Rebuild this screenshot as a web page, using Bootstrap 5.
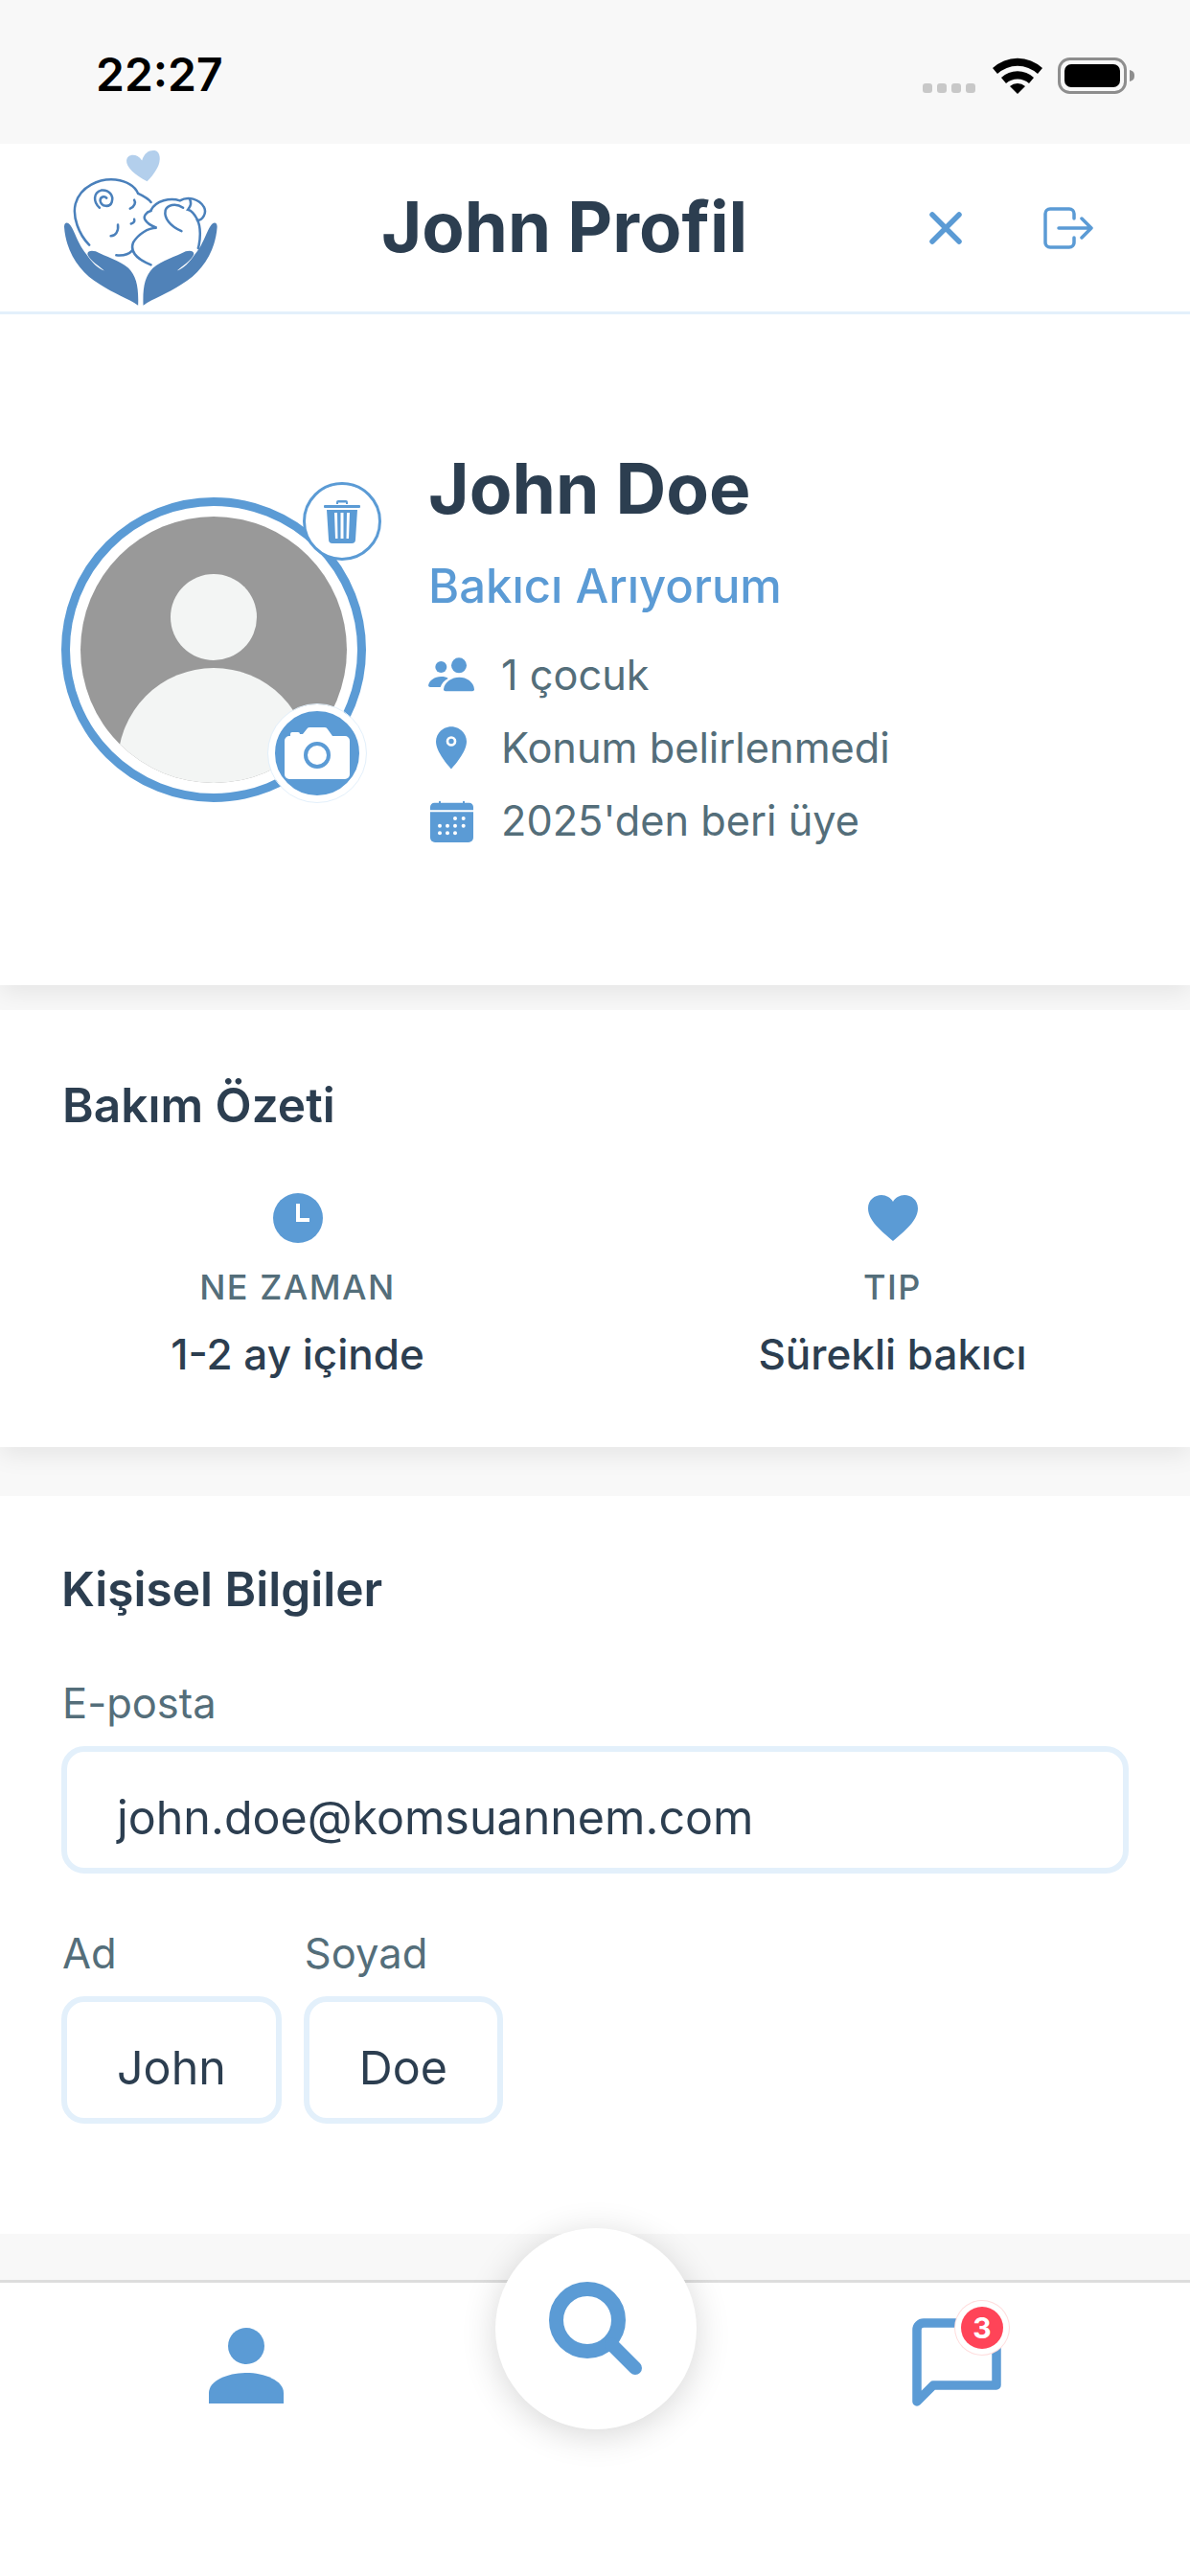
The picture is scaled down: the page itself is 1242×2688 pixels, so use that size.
<!DOCTYPE html>
<html lang="tr">

<head>
    <meta charset="UTF-8">
    <meta name="viewport" content="width=device-width, initial-scale=1.0">
    <title>John Profil</title>
    <link href="https://cdn.jsdelivr.net/npm/bootstrap@5.3.3/dist/css/bootstrap.min.css" rel="stylesheet">
    <script src="https://cdn.jsdelivr.net/npm/bootstrap@5.3.3/dist/js/bootstrap.bundle.min.js"></script>
    <style>
        body { font-family: Inter, "Liberation Sans", sans-serif; background: #f8f8f8; color: #2c3e50; }
        .app-page { width: 1242px; height: 2688px; overflow: hidden; }

        .status-row { height: 150px; background: #f8f8f8; padding: 0 58px 0 100px; }
        .status-time { font-size: 48px; font-weight: 600; color: #000; line-height: 1; margin-top: 54px; }
        .status-icons { margin-top: 58px; height: 40px; }
        .signal-dots { gap: 5px; margin-right: 18px; margin-bottom: 1px; }
        .signal-dot { width: 10px; height: 10px; border-radius: 3px; background: #c8c8c8; }

        .top-bar { height: 178px; background: #fff; border-bottom: 3px solid #e3f0fb; padding-left: 65px; padding-right: 101px; }
        .top-title { font-size: 72.500px; font-weight: 700; margin: 0 0 0 168px; line-height: 1; color: #2c3e50; }
        .top-actions { gap: 85px; }

        .sheet { background: #fff; box-shadow: 0 8px 24px rgba(0, 0, 0, .08); clip-path: inset(0 0 -40px 0); }
        .profile-sheet { height: 700px; padding-left: 64px; margin-bottom: 26px; }
        .avatar-wrap { width: 318px; height: 318px; margin-right: 65px; }
        .avatar-ring { width: 318px; height: 318px; border: 9px solid #5b9bd5; border-radius: 50%; padding: 11px; }
        .avatar-btn { width: 82px; height: 82px; background: #fff; border: 3px solid #5b9bd5; top: -16px; right: -16px; }
        .camera-btn { width: 102px; height: 102px; background: #5b9bd5; border: 7px solid #fff; outline: 1px solid #e3f0fb; bottom: 0; right: 0; }

        .profile-info { margin-top: 11px; }
        .person-name { font-size: 73px; font-weight: 700; line-height: 73px; margin: 0; }
        .person-role { font-size: 49px; font-weight: 500; color: #5b9bd5; line-height: 49px; margin-top: 41px; margin-bottom: 30px; }
        .meta-row { height: 76px; font-size: 43.300px; color: #546e7a; }
        .meta-icon { width: 48px; margin-right: 28px; }

        .care-sheet { height: 456px; margin-bottom: 51px; padding-top: 70px; }
        .section-title { font-size: 49.600px; font-weight: 600; line-height: 58px; margin: 0; color: #2c3e50; }
        .care-sheet .section-title { padding-left: 65px; }
        .care-grid { margin-top: 63px; }
        .care-label { font-size: 36px; font-weight: 500; color: #546e7a; letter-spacing: 1.5px; line-height: 44px; margin-top: 24px; }
        .care-value { font-size: 44px; font-weight: 500; line-height: 52px; margin-top: 22px; color: #2c3e50; }

        .info-sheet { height: 770px; padding: 68px 64px 0; box-shadow: none; clip-path: none; }
        .info-sheet .section-title { margin-bottom: 64px; }
        .field-label { font-size: 43.500px; color: #546e7a; line-height: 52px; margin: 0 0 19px; padding-left: 1px; }
        .field-box { font-size: 48.400px; line-height: 58px; color: #2c3e50; height: 133px; padding: 40px 52px 0; border: 6px solid #e3f0fb; border-radius: 24px; background: #fff; }
        .name-fields { gap: 23px; margin-top: 57px; }

        .spacer-grey { height: 48px; background: #f8f8f8; }
        .tab-bar { height: 309px; background: #fff; border-top: 3px solid #ddd; }
        .search-fab { width: 210px; height: 210px; background: #fff; top: -57px; left: 517px; box-shadow: 0 6px 36px rgba(0, 0, 0, .16); }
        .person-tab { left: 218px; top: 47px; }
        .chat-tab { left: 952px; top: 37px; }
        .chat-badge { width: 44px; height: 44px; background: #ff4458; color: #fff; font-size: 30px; font-weight: 700; line-height: 44px; box-shadow: 0 0 0 6px #fff, 0 0 0 7px #fdd; top: 25px; left: 1003px; }
    </style>
</head>

<body>
    <div class="app-page d-flex flex-column">
        <!-- status bar -->
        <div class="status-row d-flex justify-content-between align-items-start">
            <div class="status-time">22:27</div>
            <div class="status-icons d-flex align-items-end">
                <div class="signal-dots d-flex">
                    <span class="signal-dot"></span><span class="signal-dot"></span><span class="signal-dot"></span><span class="signal-dot"></span>
                </div>
                <svg width="52" height="40" viewBox="0 0 52 40" class="me-3">
                    <path d="M0 13 A38 38 0 0 1 52 13 L47 19 A31 31 0 0 0 5 19 Z" fill="#000"/>
                    <path d="M9 23 A25 25 0 0 1 43 23 L38 29 A18 18 0 0 0 14 29 Z" fill="#000"/>
                    <path d="M18 32 A12 12 0 0 1 34 32 L26 40 Z" fill="#000"/>
                </svg>
                <svg width="80" height="38" viewBox="0 0 80 38">
                    <rect x="1.500" y="1.500" width="69" height="35" rx="11" fill="none" stroke="#8e8e8e" stroke-width="3"/>
                    <rect x="7" y="7" width="58" height="24" rx="7" fill="#000"/>
                    <path d="M75 13 C79 14 80 16 80 19 C80 22 79 24 75 25 Z" fill="#8e8e8e"/>
                </svg>
            </div>
        </div>

        <!-- header -->
        <div class="top-bar d-flex align-items-center">
            <svg width="165" height="166" viewBox="75 78 490 495">
                <path d="M338 180 C300 160 272 135 274 115 C276 95 305 90 322 115 C330 90 345 82 362 84 C380 88 382 115 370 138 C360 155 350 170 338 180 Z" fill="#b3cfec"/>
                <g fill="#5082b8">
                    <path d="M310 566 C280 545 235 530 190 500 C130 465 85 400 80 322 C80 306 92 306 100 318 C115 340 122 375 150 408 C165 430 185 452 205 458 C190 445 160 425 153 408 C150 396 165 394 178 398 C210 415 250 425 280 450 C305 475 312 510 310 566 Z"/>
                    <path transform="translate(636 0) scale(-1 1)" d="M310 566 C280 545 235 530 190 500 C130 465 85 400 80 322 C80 306 92 306 100 318 C115 340 122 375 150 408 C165 430 185 452 205 458 C190 445 160 425 153 408 C150 396 165 394 178 398 C210 415 250 425 280 450 C305 475 312 510 310 566 Z"/>
                </g>
                <g fill="none" stroke="#4a80bb" stroke-width="7.500" stroke-linecap="round">
                    <path d="M158 378 C125 345 105 290 115 250 C130 195 190 170 240 175 C275 180 300 195 310 218 C325 225 340 232 350 245"/>
                    <path d="M190 262 C170 245 170 215 195 208 C220 205 235 225 228 245 C222 262 195 260 192 240 C192 228 205 224 212 232"/>
                    <path d="M285 265 C300 258 303 245 298 238"/>
                    <path d="M288 312 C296 310 300 305 298 298"/>
                    <path d="M225 350 C240 350 250 335 247 315"/>
                    <path d="M350 272 C335 275 325 290 332 300 C340 315 355 320 368 325 C340 325 310 345 295 370 C285 395 300 420 350 440"/>
                    <path d="M242 410 C260 412 280 408 292 395"/>
                    <path d="M350 270 C365 240 410 230 440 240 C465 225 500 235 515 260 C525 280 510 300 495 302 C505 320 505 360 497 388"/>
                    <path d="M470 235 C480 250 470 262 465 268 C480 272 490 290 495 300"/>
                    <path d="M395 270 C400 255 425 245 450 262 M395 270 C390 295 410 320 445 335"/>
                </g>
            </svg>
            <h1 class="top-title">John Profil</h1>
            <div class="top-actions d-flex align-items-center ms-auto">
                <svg width="34" height="34" viewBox="0 0 34 34" fill="none" stroke="#5b9bd5" stroke-width="5.500" stroke-linecap="round"><path d="M3 3 L31 31 M31 3 L3 31"/></svg>
                <svg width="52" height="44" viewBox="0 0 52 44" fill="none" stroke="#5b9bd5" stroke-width="3.500" stroke-linecap="round" stroke-linejoin="round"><path d="M32 12 V7 A5 5 0 0 0 27 2 H7 A5 5 0 0 0 2 7 V37 A5 5 0 0 0 7 42 H27 A5 5 0 0 0 32 37 V32"/><path d="M16 22 H50 M40 12 L50 22 L40 32"/></svg>
            </div>
        </div>

        <!-- profile -->
        <section class="sheet profile-sheet d-flex align-items-center">
            <div class="avatar-wrap position-relative flex-shrink-0">
                <div class="avatar-ring">
                    <svg width="278" height="278" viewBox="0 0 278 278" class="d-block">
                        <clipPath id="avatarClip"><circle cx="139" cy="139" r="139"/></clipPath>
                        <g clip-path="url(#avatarClip)">
                            <rect width="278" height="278" fill="#999"/>
                            <circle cx="139" cy="105" r="45" fill="#f3f5f4"/>
                            <circle cx="139" cy="258" r="100" fill="#f3f5f4"/>
                        </g>
                    </svg>
                </div>
                <div class="avatar-btn position-absolute rounded-circle d-flex align-items-center justify-content-center">
                    <svg width="38" height="45" viewBox="0 0 38 45" fill="#5b9bd5">
                        <path d="M13 4 V2 A2 2 0 0 1 15 0 H23 A2 2 0 0 1 25 2 V4 H23 V2.500 H15 V4 Z"/>
                        <rect x="0" y="5" width="38" height="3" rx="1"/>
                        <path fill-rule="evenodd" d="M3 10 H35 L33 41 A4 4 0 0 1 29 45 H9 A4 4 0 0 1 5 41 Z M11 13 L12 40 H14.500 L14 13 Z M17.500 13 V40 H20.500 V13 Z M24 13 L23.500 40 H26 L27 13 Z"/>
                    </svg>
                </div>
                <div class="camera-btn position-absolute rounded-circle d-flex align-items-center justify-content-center">
                    <svg width="68" height="54" viewBox="0 0 68 54">
                        <path d="M6 9 V7 A2 2 0 0 1 8 5 H14 A2 2 0 0 1 16 7 H19 L23 2 A4 4 0 0 1 26 0 H42 A4 4 0 0 1 45 2 L50 9 H63 A5 5 0 0 1 68 14 V49 A5 5 0 0 1 63 54 H5 A5 5 0 0 1 0 49 V14 A5 5 0 0 1 5 9 Z" fill="#fff"/>
                        <circle cx="34" cy="29" r="12" fill="#fff" stroke="#5b9bd5" stroke-width="4"/>
                    </svg>
                </div>
            </div>
            <div class="profile-info">
                <h2 class="person-name">John Doe</h2>
                <div class="person-role">Bakıcı Arıyorum</div>
                <div class="meta-row d-flex align-items-center">
                    <span class="meta-icon d-flex justify-content-center">
                        <svg width="48" height="36" viewBox="0 0 144 108" fill="#5b9bd5">
                            <circle cx="96" cy="25" r="24"/><path d="M48 100 C50 76 75 62 97 62 C120 62 142 76 144 100 A6 6 0 0 1 138 106 H54 A6 6 0 0 1 48 100 Z"/>
                            <circle cx="40" cy="30" r="18"/><path d="M0 88 C3 72 20 60 40 60 C50 60 58 62 62 66 C50 72 42 82 38 93 H6 A6 6 0 0 1 0 88 Z"/>
                        </svg>
                    </span>
                    <span>1 çocuk</span>
                </div>
                <div class="meta-row d-flex align-items-center">
                    <span class="meta-icon d-flex justify-content-center">
                        <svg width="32" height="45" viewBox="0 0 96 134">
                            <path d="M48 0 C22 0 0 21 0 47 C0 80 40 124 48 133 C56 124 96 80 96 47 C96 21 74 0 48 0 Z" fill="#5b9bd5"/>
                            <circle cx="48" cy="46" r="12" fill="#5b9bd5" stroke="#fff" stroke-width="8"/>
                        </svg>
                    </span>
                    <span>Konum belirlenmedi</span>
                </div>
                <div class="meta-row d-flex align-items-center">
                    <span class="meta-icon d-flex justify-content-center">
                        <svg width="45" height="45" viewBox="0 0 135 135" fill="#5b9bd5">
                            <path d="M27 8 a3 3 0 0 1 6 0 V11 H102 V8 a3 3 0 0 1 6 0 V11 H122 A13 13 0 0 1 135 24 V34 H0 V24 A13 13 0 0 1 13 11 H27 Z"/>
                            <path d="M0 40 H135 V120 A15 15 0 0 1 120 135 H15 A15 15 0 0 1 0 120 Z"/>
                            <g fill="#fff">
                                <circle cx="78" cy="60" r="6"/><circle cx="104" cy="60" r="6"/>
                                <circle cx="30" cy="83" r="6"/><circle cx="54" cy="83" r="6"/><circle cx="78" cy="83" r="6"/><circle cx="104" cy="83" r="6"/>
                                <circle cx="30" cy="106" r="6"/><circle cx="54" cy="106" r="6"/><circle cx="78" cy="106" r="6"/>
                            </g>
                        </svg>
                    </span>
                    <span>2025'den beri üye</span>
                </div>
            </div>
        </section>

        <!-- care summary -->
        <section class="sheet care-sheet">
            <h3 class="section-title">Bakım Özeti</h3>
            <div class="row g-0 care-grid text-center">
                <div class="col-6">
                    <svg width="52" height="52" viewBox="0 0 52 52" class="d-block mx-auto"><circle cx="26" cy="26" r="26" fill="#5b9bd5"/><path d="M26 11 V28 H38" fill="none" stroke="#fff" stroke-width="4"/></svg>
                    <div class="care-label">NE ZAMAN</div>
                    <div class="care-value">1-2 ay içinde</div>
                </div>
                <div class="col-6">
                    <svg width="52" height="52" viewBox="0 0 52 48" class="d-block mx-auto"><path d="M26 48 C12 36 0 26 0 14 C0 5 7 0 14 0 C19 0 24 3 26 7 C28 3 33 0 38 0 C45 0 52 5 52 14 C52 26 40 36 26 48 Z" fill="#5b9bd5"/></svg>
                    <div class="care-label">TIP</div>
                    <div class="care-value">Sürekli bakıcı</div>
                </div>
            </div>
        </section>

        <!-- personal info -->
        <section class="sheet info-sheet">
            <h3 class="section-title">Kişisel Bilgiler</h3>
            <p class="field-label">E-posta</p>
            <div class="form-control field-box">john.doe@komsuannem.com</div>
            <div class="name-fields d-flex">
                <div>
                    <p class="field-label">Ad</p>
                    <div class="form-control field-box">John</div>
                </div>
                <div>
                    <p class="field-label">Soyad</p>
                    <div class="form-control field-box">Doe</div>
                </div>
            </div>
        </section>

        <div class="spacer-grey"></div>

        <!-- tab bar -->
        <div class="tab-bar position-relative">
            <svg class="person-tab position-absolute" width="78" height="80" viewBox="0 0 78 80" fill="#5b9bd5">
                <circle cx="39" cy="19" r="19"/>
                <path d="M0 79 V68 C0 55 20 47 39 47 C58 47 78 55 78 68 V79 Z"/>
            </svg>
            <div class="search-fab position-absolute rounded-circle d-flex align-items-center justify-content-center">
                <svg width="98" height="98" viewBox="0 0 98 98" fill="none" stroke="#5b9bd5" stroke-linecap="round">
                    <circle cx="40" cy="40" r="32.500" stroke-width="15"/>
                    <path d="M65 65 L90 90" stroke-width="14"/>
                </svg>
            </div>
            <svg class="chat-tab position-absolute" width="94" height="94" viewBox="0 0 94 94" fill="none">
                <path d="M5 87 V12 A7 7 0 0 1 12 5 H88 V70 H22 Z" stroke="#5b9bd5" stroke-width="9.500" stroke-linejoin="round"/>
            </svg>
            <div class="chat-badge position-absolute rounded-circle text-center">3</div>
        </div>
    </div>
</body>

</html>
